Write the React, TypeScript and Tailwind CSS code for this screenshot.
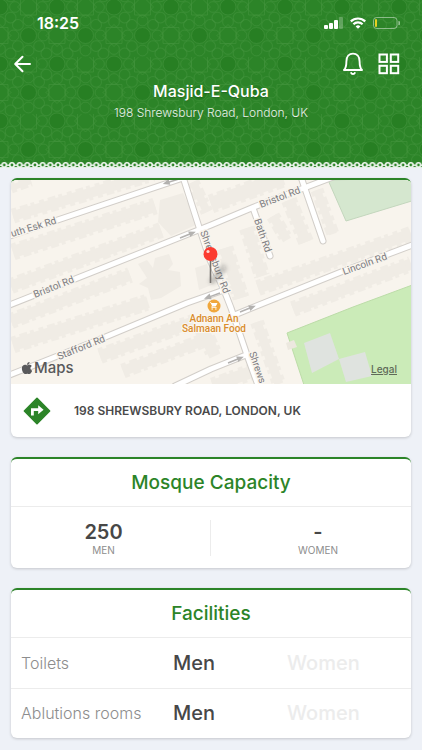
import type { ReactNode } from "react";
import { FaApple } from "react-icons/fa";
import { MdShoppingCart } from "react-icons/md";

type Strip = { from: [number, number]; to: [number, number]; depth: number };
type RoadLabel = { text: string; x: number; y: number; angle: number };

// one repeat of the header ornament
const TILE = 57;
const ROSETTES = [
  [0, 7],
  [TILE, 7],
  [0, 7 + TILE],
  [TILE, 7 + TILE],
  [TILE / 2, 7 + TILE / 2],
  [TILE / 2, 7 - TILE / 2],
];
const STARS = [
  [TILE / 2, 7],
  [0, 7 + TILE / 2],
  [TILE, 7 + TILE / 2],
];
const PETALS = [0, 45, 90, 135, 180, 225, 270, 315];

const STRIPS: Strip[] = [
  { from: [0, 8], to: [20, 1], depth: 6 },
  { from: [2, 36], to: [142, -6], depth: 10 },
  { from: [2, 72], to: [144, 26], depth: 12 },
  { from: [0, 106], to: [150, 50], depth: 11 },
  { from: [0, 141], to: [119, 95], depth: 11 },
  { from: [2, 165], to: [137, 122], depth: 12 },
  { from: [89, 176], to: [182, 142], depth: 11 },
  { from: [112, 191], to: [194, 160], depth: 10 },
  { from: [200, 24], to: [272, -2], depth: 14 },
  { from: [182, 2], to: [196, 32], depth: 8 },
  { from: [278, 20], to: [295, 62], depth: 11 },
  { from: [306, 10], to: [322, 54], depth: 8 },
  { from: [262, 36], to: [276, 60], depth: 9 },
  { from: [247, 108], to: [400, 54], depth: 11 },
  { from: [282, 129], to: [400, 84], depth: 11 },
  { from: [214, 68], to: [230, 118], depth: 12 },
  { from: [236, 48], to: [251, 96], depth: 11 },
  { from: [246, 142], to: [268, 204], depth: 9 },
  { from: [202, 206], to: [240, 192], depth: 12 },
  { from: [192, 150], to: [204, 176], depth: 12 },
];

const BLOCKS = [
  "M149 20 L172 13 L187 44 L160 56 L147 42 Z",
  "M127 84 L136 80 L142 88 L144 78 L158 74 L162 84 L157 90 L169 92 L170 106 L150 118 L140 120 L137 108 L128 104 L136 98 Z",
  "M184 88 L196 84 L203 104 L188 110 Z",
];

const ROADS = [
  "M-4 57 L172 -2",
  "M-4 126 L200 45 L243 27 L322 -3",
  "M172 -3 L188 47 L199 80 L213 110 L220 128 L236 175 L248 208",
  "M-4 196 L92 158 L176 123 L213 110",
  "M404 64 L330 92 L243 127 L221 136",
  "M164 206 L200 189 L235 175",
  "M242 28 L259 76",
  "M290 -3 L312 61",
];

const LABELS: RoadLabel[] = [
  { text: "uth Esk Rd", x: 1, y: 57, angle: -17 },
  { text: "Bristol Rd", x: 24, y: 118, angle: -22 },
  { text: "Stafford Rd", x: 48, y: 180, angle: -22 },
  { text: "Bristol Rd", x: 250, y: 28, angle: -21 },
  { text: "Lincoln Rd", x: 333, y: 95, angle: -20 },
  { text: "Bath Rd", x: 243, y: 40, angle: 71 },
  { text: "Shrewsbury Rd", x: 189, y: 52, angle: 69 },
  { text: "Shrews", x: 238, y: 173, angle: 71 },
];

const ARROWS = [
  { x: 168, y: -1, angle: 163 },
  { x: 169, y: 58, angle: -22 },
  { x: 229, y: 132, angle: -22 },
  { x: 217, y: 183, angle: -22 },
  { x: 209, y: 113, angle: 160 },
];

const FACILITIES = [
  { name: "Toilets", men: true, women: false },
  { name: "Ablutions rooms", men: true, women: false },
];

function HeaderPattern() {
  return (
    <svg className="absolute inset-0 h-full w-full" aria-hidden="true">
      <defs>
        <pattern id="girih" width={TILE} height={TILE} patternUnits="userSpaceOnUse">
          <g fill="none" stroke="#46953f" strokeOpacity="0.5" strokeWidth="1">
            {ROSETTES.map(([x, y]) => (
              <g key={`${x}-${y}`} transform={`translate(${x} ${y})`}>
                <circle r="8" fill="#277f23" />
                {PETALS.map((a) => (
                  <circle key={a} cx="15" r="5.4" transform={`rotate(${a})`} />
                ))}
              </g>
            ))}
            {STARS.map(([x, y]) => (
              <g key={`${x}-${y}`} transform={`translate(${x} ${y})`}>
                <path d="M-8 -8 H8 V8 H-8 Z" />
                <path d="M0 -11 L11 0 L0 11 L-11 0 Z" />
              </g>
            ))}
          </g>
        </pattern>
      </defs>
      <rect width="100%" height="100%" fill="url(#girih)" />
    </svg>
  );
}

function LaceBorder() {
  return (
    <svg className="relative block h-[6px] w-full" aria-hidden="true">
      <defs>
        <pattern id="lace" x="0.5" width="7.67" height="6" patternUnits="userSpaceOnUse">
          <rect y="5" width="8" height="1" fill="#dfeadf" />
          <rect y="2.4" width="8" height="1.6" fill="#dcebdc" />
          <circle cx="3.8" cy="3" r="2.2" fill="#2c8428" stroke="#f3f8f3" strokeWidth="1.6" />
        </pattern>
      </defs>
      <rect width="100%" height="6" fill="url(#lace)" />
    </svg>
  );
}

function StatusBar() {
  return (
    <div className="flex h-6 items-center justify-between pr-[22px] pl-[37px]">
      <span className="text-base leading-6 font-semibold">18:25</span>
      <div className="flex items-center gap-[7px]">
        <svg width="19" height="12" viewBox="0 0 19 12" fill="#fff" aria-hidden="true">
          <rect x="0" y="8" width="4" height="4" rx="1" />
          <rect x="5" y="6" width="4" height="6" rx="1" />
          <rect x="10" y="3" width="4" height="9" rx="1" />
          <rect x="15" y="0" width="4" height="12" rx="1" opacity="0.25" />
        </svg>
        <svg width="16" height="12" viewBox="0 0 16 12" fill="none" stroke="#fff" strokeWidth="2.2" aria-hidden="true">
          <path d="M0.8 4.4 A10.4 10.4 0 0 1 15.2 4.4" />
          <path d="M3.4 7.2 A6.6 6.6 0 0 1 12.6 7.2" />
          <path d="M8 11.8 L5.6 9.4 A3.5 3.5 0 0 1 10.4 9.4 Z" fill="#fff" stroke="none" />
        </svg>
        <svg width="27" height="12" viewBox="0 0 27 12" aria-hidden="true">
          <rect x="0.5" y="0.5" width="23.5" height="11" rx="3" fill="none" stroke="#fff" strokeOpacity="0.45" />
          <rect x="2" y="2" width="2" height="8" rx="1" fill="#e6d021" />
          <path d="M25.4 4 A2 2 0 0 1 25.4 8 Z" fill="#fff" fillOpacity="0.5" />
        </svg>
      </div>
    </div>
  );
}

function Header() {
  return (
    <header className="relative overflow-hidden bg-[#2c8428] text-white">
      <HeaderPattern />
      <div className="relative pt-[11px] pb-[39px]">
        <StatusBar />
        <div className="flex h-[58px] items-center justify-between px-[13px]">
          <button type="button" aria-label="Back">
            <svg width="19" height="18" viewBox="0 0 19 18" fill="none" stroke="#fff" strokeWidth="2" strokeLinecap="round" strokeLinejoin="round">
              <path d="M17 9 H2.5 M9.5 1.8 L2.2 9 L9.5 16.2" />
            </svg>
          </button>
          <div className="flex items-center gap-[14px] pr-[9px]">
            <button type="button" aria-label="Notifications">
              <svg width="22" height="24" viewBox="0 0 22 24" fill="none" stroke="#fff" strokeWidth="1.9" strokeLinecap="round" strokeLinejoin="round">
                <path d="M2 18 H20 C17.6 15.6 17.6 13.6 17.6 9.4 C17.6 4.6 14.8 1.6 11 1.6 C7.2 1.6 4.4 4.6 4.4 9.4 C4.4 13.6 4.4 15.6 2 18 Z" />
                <path d="M9.2 21 C9.6 22.4 12.4 22.4 12.8 21" />
              </svg>
            </button>
            <button type="button" aria-label="Menu">
              <svg width="22" height="22" viewBox="0 0 22 22" fill="none" stroke="#fff" strokeWidth="2">
                <rect x="1.5" y="1.5" width="7.4" height="7.4" />
                <rect x="12.8" y="1.5" width="7.4" height="7.4" />
                <rect x="1.5" y="12.8" width="7.4" height="7.4" />
                <rect x="12.8" y="12.8" width="7.4" height="7.4" />
              </svg>
            </button>
          </div>
        </div>
        <div className="-mt-[12px] text-center">
          <h1 className="text-base leading-5 font-medium text-shadow-sm">Masjid-E-Quba</h1>
          <p className="mt-0.5 text-xs leading-5 font-light text-white/90 text-shadow-sm">
            198 Shrewsbury Road, London, UK
          </p>
        </div>
      </div>
      <LaceBorder />
    </header>
  );
}

function StreetMap() {
  return (
    <svg
      className="block h-[204px] w-full bg-[#f8f4ed]"
      viewBox="0 0 400 204"
      preserveAspectRatio="xMidYMid slice"
      role="img"
      aria-label="Map of Shrewsbury Road"
    >
      <defs>
        <filter id="soft" x="-50%" y="-50%" width="200%" height="200%">
          <feGaussianBlur stdDeviation="2" />
        </filter>
      </defs>

      <path d="M317 0 L335 41 L404 20 L404 -2 Z" fill="#d5e7cf" stroke="#c3d6bd" />
      <path d="M276 153 L342 127 L404 104 L404 208 L294 208 Z" fill="#cbebb8" stroke="#bcdca8" />
      <path d="M293 163 L319 153 L328 179 L301 193 Z" fill="#dfe3df" />
      <path d="M328 179 L354 172 L361 196 L335 202 Z" fill="#dfe3df" />
      <path d="M275 163 L283 160 L286 167 L277 170 Z" fill="#ece8df" />

      <g fill="none" stroke="#f0ece5">
        {STRIPS.map((s, i) => {
          const d = `M${s.from[0]} ${s.from[1]} L${s.to[0]} ${s.to[1]}`;
          return (
            <g key={i}>
              <path d={d} strokeWidth={s.depth} />
              <path d={d} strokeWidth={s.depth + 5} strokeDasharray="5 4 8 3 4 5" />
            </g>
          );
        })}
      </g>
      {BLOCKS.map((d) => (
        <path key={d} d={d} fill="#f0ece5" />
      ))}

      <g fill="none" stroke="#d2cec9" strokeWidth="7" strokeLinejoin="round" strokeLinecap="round">
        {ROADS.map((d) => (
          <path key={d} d={d} />
        ))}
      </g>
      <g fill="none" stroke="#fff" strokeWidth="5" strokeLinejoin="round" strokeLinecap="round">
        {ROADS.map((d) => (
          <path key={d} d={d} />
        ))}
      </g>

      {ARROWS.map((a) => (
        <g key={`${a.x}-${a.y}`} transform={`translate(${a.x} ${a.y}) rotate(${a.angle})`}>
          <path d="M0 0 H12" stroke="#b3b1af" strokeWidth="1.5" />
          <path d="M10 -3 L17 0 L10 3 Z" fill="#b3b1af" />
        </g>
      ))}

      <g
        fill="#7b7b7f"
        stroke="#f8f4ed"
        strokeWidth="3"
        strokeLinejoin="round"
        paintOrder="stroke"
        className="font-['Roboto',sans-serif] text-[10px]"
      >
        {LABELS.map((l) => (
          <text key={`${l.x}-${l.y}`} transform={`translate(${l.x} ${l.y}) rotate(${l.angle})`}>
            {l.text}
          </text>
        ))}
      </g>

      <circle cx="203" cy="126" r="6.5" fill="#f0a73c" />
      <MdShoppingCart x="198.5" y="121.5" size={9} color="#fff" />
      <g
        fill="#d98c2c"
        stroke="#fbf7f0"
        strokeWidth="2"
        paintOrder="stroke"
        textAnchor="middle"
        className="font-['Roboto',sans-serif] text-[10px] font-medium"
      >
        <text x="203" y="142">Adnann An</text>
        <text x="203" y="152">Salmaan Food</text>
      </g>

      <path d="M200 103 L214 86" stroke="#555" strokeWidth="6" opacity="0.35" filter="url(#soft)" />
      <path d="M199.5 80 V103" stroke="#77736f" strokeWidth="1.6" />
      <circle cx="199.5" cy="74" r="7" fill="#fb3b30" />
      <circle cx="197" cy="71.5" r="1.6" fill="#ffd9d5" />
    </svg>
  );
}

function DirectionsIcon() {
  return (
    <svg width="28" height="28" viewBox="0 0 28 28" aria-hidden="true">
      <path d="M14 1.4 L26.6 14 L14 26.6 L1.4 14 Z" fill="#2c8428" stroke="#2c8428" strokeWidth="1.6" strokeLinejoin="round" />
      <path d="M9.4 18.4 V12.6 H16" fill="none" stroke="#fff" strokeWidth="2.8" />
      <path d="M15.2 8.2 L20.6 12.8 L15.2 17.2 Z" fill="#fff" />
    </svg>
  );
}

function Card({ title, children }: { title?: string; children: ReactNode }) {
  return (
    <section className="overflow-hidden rounded-md border-t-2 border-[#2c8428] bg-white shadow-[0_1px_3px_rgba(0,0,0,0.18)]">
      {title && (
        <h2 className="border-b border-[#ececec] text-center text-[19px] leading-[47px] font-medium text-[#2c8428]">
          {title}
        </h2>
      )}
      {children}
    </section>
  );
}

function Count({ value, label }: { value: string; label: string }) {
  return (
    <div className="text-center">
      <div className="text-xl leading-6 font-semibold text-[#474747]">{value}</div>
      <div className="text-[10px] leading-3 text-[#8d8d8d]">{label}</div>
    </div>
  );
}

export default function App() {
  return (
    <div className="min-h-screen bg-[#eef1f7] font-[Inter,sans-serif]">
      <Header />
      <main className="flex flex-col gap-5 px-[11px] pt-[10px] pb-3">
        <Card>
          <div className="relative">
            <StreetMap />
            <div className="absolute bottom-1 left-[9px] flex items-center text-[#59595b]">
              <FaApple size={14} />
              <span className="text-[15px] leading-6 font-medium">Maps</span>
            </div>
            <a href="#legal" className="absolute right-[14px] bottom-[7px] text-[10px] leading-4 font-medium text-[#5f6a59] underline">
              Legal
            </a>
          </div>
          <button type="button" className="flex h-[53px] w-full items-center gap-[23px] px-3 text-left">
            <DirectionsIcon />
            <span className="text-xs font-semibold text-[#4a4a4a]">198 SHREWSBURY ROAD, LONDON, UK</span>
          </button>
        </Card>

        <Card title="Mosque Capacity">
          <div className="grid grid-cols-2 divide-x divide-[#ececec] pt-[13px] pb-3">
            <div className="pr-[14px]">
              <Count value="250" label="MEN" />
            </div>
            <div className="pl-[14px]">
              <Count value="-" label="WOMEN" />
            </div>
          </div>
        </Card>

        <Card title="Facilities">
          <table className="w-full table-fixed">
            <tbody>
              {FACILITIES.map((f) => (
                <tr key={f.name} className="h-[50px] border-b border-[#ececec] last:border-b-0">
                  <th scope="row" className="w-[37%] pl-[10px] text-left text-base font-light whitespace-nowrap text-[#8d8d8d]">
                    {f.name}
                  </th>
                  <td className={f.men ? "pl-[14px] text-xl font-medium text-[#474747]" : "pl-[14px] text-xl font-medium text-[#ececec]"}>
                    Men
                  </td>
                  <td className={f.women ? "pl-0.5 text-xl font-medium text-[#474747]" : "pl-0.5 text-xl font-medium text-[#ececec]"}>
                    Women
                  </td>
                </tr>
              ))}
            </tbody>
          </table>
        </Card>
      </main>
    </div>
  );
}
